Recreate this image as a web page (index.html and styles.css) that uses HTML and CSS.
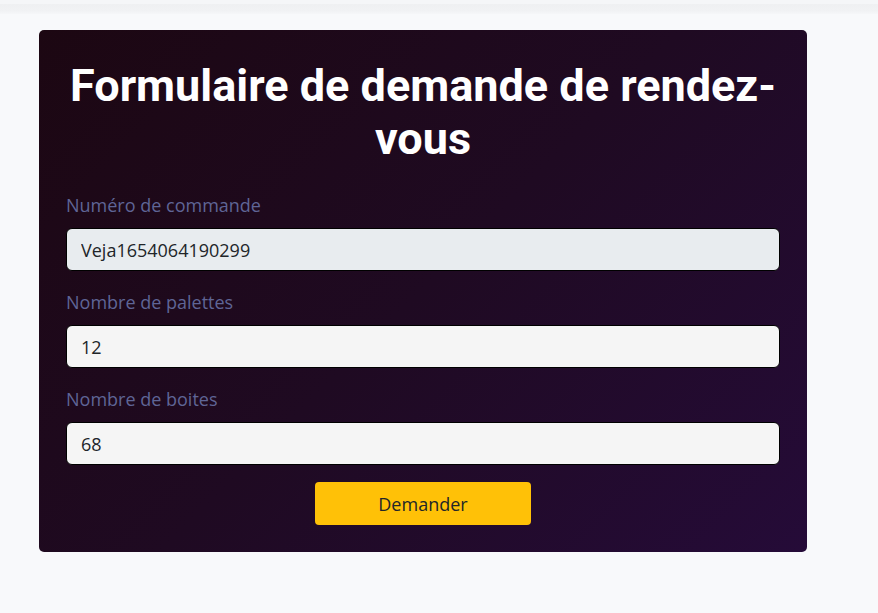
FILE: index.html
```html
<!DOCTYPE html>
<html lang="fr">
<head>
<meta charset="utf-8">
<link rel="stylesheet" href="styles.css">
</head>
<body>
<div class="topbar"></div>
<main class="page">
  <form class="card">
    <h1 class="title">Formulaire de demande de rendez-vous</h1>
    <div class="field">
      <label class="label">Numéro de commande</label>
      <input class="input input-disabled" type="text" value="Veja1654064190299" disabled>
    </div>
    <div class="field">
      <label class="label">Nombre de palettes</label>
      <input class="input" type="text" value="12">
    </div>
    <div class="field">
      <label class="label">Nombre de boites</label>
      <input class="input" type="text" value="68">
    </div>
    <div class="actions">
      <button class="btn" type="button">Demander</button>
    </div>
  </form>
</main>
</body>
</html>
```
FILE: styles.css
```css
* { box-sizing: border-box; }
html, body { margin: 0; padding: 0; }
body {
  background: #f8f9fb;
  font-family: "Open Sans", "Noto Sans", sans-serif;
  height: 613px;
  overflow: hidden;
}
.topbar {
  height: 14px;
  background: linear-gradient(#eff0f2, #f1f2f4 70%, #f6f7f9);
  border-top: 4px solid #f5f6f8;
}
.page {
  padding: 16px 71px 0 39px;
}
.card {
  width: 768px;
  height: 522px;
  border-radius: 5px;
  background: linear-gradient(135deg, #1c0712 0%, #1f0a22 50%, #250b38 100%);
  padding: 29px 27px 0 27px;
}
.title {
  margin: 0 0 26px 0;
  font-family: Roboto, "Noto Sans", sans-serif;
  font-weight: 700;
  font-size: 45px;
  line-height: 53px;
  color: #ffffff;
  text-align: center;
}
.field {
  display: flex;
  flex-direction: column;
  margin-bottom: 17px;
}
.label {
  color: #5f6596;
  font-size: 18px;
  line-height: 24px;
  padding-top: 2px;
  margin-bottom: 11px;
}
.input {
  height: 43px;
  border: 1px solid #000000;
  border-radius: 6px;
  background: #f5f5f5;
  font-family: "Open Sans", "Noto Sans", sans-serif;
  font-size: 18px;
  color: #212529;
  padding: 0 14px;
  width: 100%;
}
.input-disabled {
  background: #e8ecef;
  color: #212529;
  -webkit-text-fill-color: #212529;
  opacity: 1;
}
.actions {
  display: flex;
  justify-content: center;
}
.btn {
  width: 216px;
  height: 43px;
  border: none;
  border-radius: 4px;
  background: #ffc107;
  color: #212529;
  font-family: "Open Sans", "Noto Sans", sans-serif;
  font-size: 18px;
}
```
